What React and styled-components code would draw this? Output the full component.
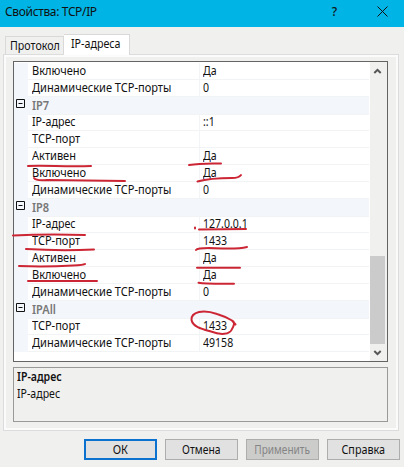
import React from "react";
import styled, { createGlobalStyle } from "styled-components";

const GlobalStyle = createGlobalStyle`
  * { box-sizing: border-box; }
  body { margin: 0; background: #f0f0ef; }
`;

const Dialog = styled.div`
  position: relative;
  display: flex;
  flex-direction: column;
  width: 404px;
  height: 467px;
  overflow: hidden;
  background: #f0f0ef;
  color: #111;
  font: 12px/17px "Noto Sans", "Open Sans", sans-serif;
  white-space: nowrap;
`;

const Label = styled.span`
  display: inline-block;
  transform: scaleX(${(p) => p.$scale || 0.92});
  transform-origin: ${(p) => (p.$centered ? "center" : "left")};
`;

const TitleBar = styled.header`
  display: flex;
  align-items: center;
  height: 27px;
  flex: none;
  padding: 0 16px 4px 5px;
  background: #00b5e5;
`;

const Title = styled.span`
  flex: 1;
  letter-spacing: -0.35px;
`;

const HelpMark = styled.span`
  width: 9px;
  margin-right: 38px;
  font-weight: 500;
  text-align: center;
`;

const Tabs = styled.nav`
  display: flex;
  align-items: flex-end;
  height: 28px;
  flex: none;
  padding-left: 5px;
  position: relative;
`;

const Tab = styled.div`
  width: ${(p) => p.$width}px;
  height: ${(p) => (p.$active ? 21 : 18)}px;
  margin-bottom: ${(p) => (p.$active ? 0 : 1)}px;
  padding: ${(p) => (p.$active ? "0 0 0 7px" : "0 0 0 4px")};
  border: 1px solid #d9d9d9;
  border-bottom: 0;
  border-left-width: ${(p) => (p.$active ? 0 : 1)}px;
  background: ${(p) => (p.$active ? "#fff" : "#f0f0ef")};
`;

const TabPage = styled.main`
  width: 396px;
  height: 377px;
  flex: none;
  margin: -1px 0 0 3px;
  padding: 6px 9px 0;
  border: 1px solid #dcdcdc;
  box-shadow: inset 0 0 0 2px #fbfbfb;
`;

const GridFrame = styled.section`
  display: flex;
  width: 375px;
  height: 301px;
  border: 1px solid #646464;
  background: #fff;
`;

const Rows = styled.div`
  flex: 1;
  padding-top: 1px;
`;

const Row = styled.div`
  display: grid;
  grid-template-columns: 14px 172px 1fr;
  height: 17px;
  margin-right: 1px;
  background: ${(p) => (p.$group ? "#f3f6fa" : "#fff")};
  line-height: 16px;
`;

const Gutter = styled.div`
  padding: 2px 0 0 2px;
  background: #f3f6fa;
  line-height: 0;
`;

const Name = styled.div`
  padding: ${(p) => (p.$group ? "1px" : 0)} 0 0 4px;
  border-right: 1px solid ${(p) => (p.$group ? "transparent" : "#f3f4f6")};
  border-bottom: 1px solid #f1f3f5;
  color: ${(p) => (p.$group ? "#777" : "#111")};
  font-weight: ${(p) => (p.$group ? 600 : 400)};
`;

const Value = styled.div`
  padding-left: 3px;
  border-bottom: 1px solid #f1f3f5;
`;

const ScrollBar = styled.aside`
  display: flex;
  flex-direction: column;
  align-items: center;
  width: 17px;
  padding: 5px 2px 4px 0;
  background: #f0f0ef;
`;

const Thumb = styled.div`
  align-self: flex-start;
  width: 15px;
  height: 88px;
  margin: auto 0 5px;
  background: #cbcbcb;
`;

const Description = styled.section`
  width: 375px;
  height: 55px;
  margin-top: 5px;
  padding: 0 3px;
  border: 1px solid #999;
`;

const Heading = styled.div`
  font-weight: 600;
`;

const Actions = styled.footer`
  display: flex;
  gap: 8px;
  margin: 8px 0 0 84px;
`;

const Button = styled.button`
  width: 73px;
  height: 21px;
  flex: none;
  padding: 0;
  border: ${(p) => (p.$primary ? "2px solid #0b72cf" : "1px solid #adadad")};
  background: ${(p) => (p.disabled ? "#cccccb" : "#e1e1e1")};
  color: ${(p) => (p.disabled ? "#858585" : "#111")};
  font: 12px/17px "Noto Sans", sans-serif;
`;

const Ink = styled.svg`
  position: absolute;
  inset: 0;
  pointer-events: none;
`;

const rows = [
  ["Включено", "Да"],
  ["Динамические TCP-порты", "0"],
  ["IP7"],
  ["IP-адрес", "::1"],
  ["TCP-порт", ""],
  ["Активен", "Да"],
  ["Включено", "Да"],
  ["Динамические TCP-порты", "0"],
  ["IP8"],
  ["IP-адрес", "127.0.0.1"],
  ["TCP-порт", "1433"],
  ["Активен", "Да"],
  ["Включено", "Да"],
  ["Динамические TCP-порты", "0"],
  ["IPAll"],
  ["TCP-порт", "1433"],
  ["Динамические TCP-порты", "49158"],
];

const nameScale = { "IP-адрес": 0.89 };

const strokes = [
  "M28 166C45 165 65 167 91 166",
  "M189 165Q200 163 221 163.5",
  "M34 178Q36 181 47 180L125 181",
  "M197.5 181.5Q210 178 232 178Q239 178 241 175",
  "M13 235.5Q45 234 85 235",
  "M195 227.5V228.5M199 229.5L246 229",
  "M26 249Q60 251 94 249.5",
  "M196 250Q198 247 222 248.5Q239 249 247 247",
  "M19 266Q45 267 73 265.5Q84 265 85 264",
  "M197 267.7H240",
  "M28 281H97",
  "M198.5 282.7Q205 284 234 283.7",
  "M235.5 324.5L232 320.5Q224 316 217 314Q207 310.5 199 312Q191 314 191.5 320C193 327 202 329 211 331.5C220 335 230 335 232 329Q235 324 233.5 321.5",
];

const Expander = () => (
  <svg width="10" height="10" viewBox="0 0 10 10" fill="none" stroke="#111">
    <path d="M.5 .5H8.5V8.5H.5ZM2.5 4.5H6.5" />
  </svg>
);

const Chevron = ({ down }) => (
  <svg width="9" height="8" viewBox="0 0 9 8" fill="none" stroke="#555" strokeWidth="2">
    <path d={down ? "M1.3 2L4.5 5.2L7.7 2" : "M1.3 6L4.5 2.8L7.7 6"} />
  </svg>
);

export default function App() {
  return (
    <Dialog>
      <GlobalStyle />
      <TitleBar>
        <Title>Свойства: TCP/IP</Title>
        <HelpMark>?</HelpMark>
        <svg width="11" height="11" viewBox="0 0 11 11" stroke="#111">
          <path d="M.5 .5L10.5 10.5M10.5 .5L.5 10.5" />
        </svg>
      </TitleBar>
      <Tabs>
        <Tab $width={59}><Label $scale={0.89}>Протокол</Label></Tab>
        <Tab $width={66} $active><Label $scale={0.89}>IP-адреса</Label></Tab>
      </Tabs>
      <TabPage>
        <GridFrame>
          <Rows>
            {rows.map(([name, value], i) => {
              const group = value === undefined;
              return (
                <Row key={i} $group={group}>
                  <Gutter>{group && <Expander />}</Gutter>
                  <Name $group={group}><Label $scale={nameScale[name]}>{name}</Label></Name>
                  <Value><Label $scale={0.88}>{value}</Label></Value>
                </Row>
              );
            })}
          </Rows>
          <ScrollBar>
            <Chevron />
            <Thumb />
            <Chevron down />
          </ScrollBar>
        </GridFrame>
        <Description>
          <Heading><Label $scale={0.88}>IP-адрес</Label></Heading>
          <div><Label $scale={0.88}>IP-адрес</Label></div>
        </Description>
      </TabPage>
      <Actions>
        <Button $primary><Label $centered>ОК</Label></Button>
        <Button><Label $centered $scale={0.86}>Отмена</Label></Button>
        <Button disabled><Label $centered $scale={0.84}>Применить</Label></Button>
        <Button><Label $centered $scale={0.9}>Справка</Label></Button>
      </Actions>
      <Ink width="404" height="467" fill="none" stroke="#cc2634" strokeWidth="2" strokeLinecap="round" strokeLinejoin="round">
        {strokes.map((d) => <path key={d} d={d} />)}
      </Ink>
    </Dialog>
  );
}
